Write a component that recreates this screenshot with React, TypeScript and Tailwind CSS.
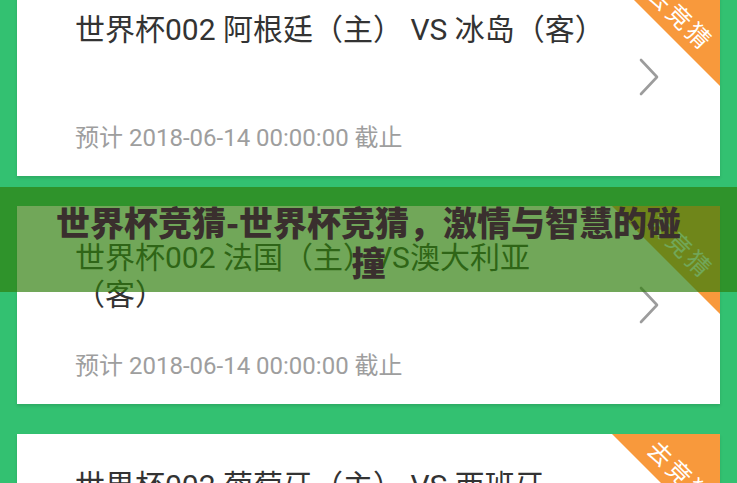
import React from "react";

type Match = { title: string; deadline: string };

const matches: Match[] = [
  { title: "世界杯002 阿根廷（主） VS 冰岛（客）", deadline: "预计 2018-06-14 00:00:00 截止" },
  { title: "世界杯002 法国（主）VS澳大利亚（客）", deadline: "预计 2018-06-14 00:00:00 截止" },
  { title: "世界杯002 葡萄牙（主） VS 西班牙（客）", deadline: "预计 2018-06-14 00:00:00 截止" },
];

function Chevron() {
  return (
    <svg width="20" height="38" viewBox="0 0 20 38" fill="none" className="shrink-0 ml-[39px] mr-[61px]">
      <polyline points="2,2 18,19 2,36" stroke="#9c9c9c" strokeWidth="2.6" strokeLinecap="round" strokeLinejoin="round" />
    </svg>
  );
}

function Ribbon() {
  return (
    <div className="absolute top-0 right-0 w-[108px] h-[108px] bg-[#f8993c] [clip-path:polygon(0_0,100%_0,100%_100%)]">
      <span className="absolute left-[69px] top-[39px] -translate-x-1/2 -translate-y-1/2 rotate-45 whitespace-nowrap text-white text-[24px] leading-none tracking-[3px] font-['Noto_Sans_CJK_SC',sans-serif]">
        去竞猜
      </span>
    </div>
  );
}

function MatchCard({ m }: { m: Match }) {
  return (
    <div className="relative h-[198px] shrink-0 bg-white flex items-center overflow-hidden shadow-[0_2px_3px_rgba(0,0,0,0.12)]">
      <div className="flex-1 min-w-0 h-full flex flex-col justify-between pl-[58px] pt-[33px] pb-[22px]">
        <p className="text-[30px] leading-[37px] text-[#333333]">{m.title}</p>
        <p className="text-[24px] leading-[32px] text-[#9e9e9e]">{m.deadline}</p>
      </div>
      <Chevron />
      <Ribbon />
    </div>
  );
}

export default function App() {
  return (
    <div className="relative h-screen overflow-hidden bg-[#33c171] font-['Roboto','Noto_Sans_CJK_SC',sans-serif]">
      <div className="flex flex-col gap-[30px] px-[17px] -mt-[22px]">
        {matches.map((m, i) => (
          <MatchCard key={i} m={m} />
        ))}
      </div>
      <div className="absolute left-0 right-0 top-[187px] h-[105px] bg-[rgba(45,125,10,0.68)] flex items-center justify-center pt-[5px] px-[40px]">
        <h1 className="text-center text-[34px] leading-[40px] font-black text-[#3a2f2e] font-['Noto_Sans_CJK_SC',sans-serif]">
          世界杯竞猜-世界杯竞猜，激情与智慧的碰撞
        </h1>
      </div>
    </div>
  );
}
